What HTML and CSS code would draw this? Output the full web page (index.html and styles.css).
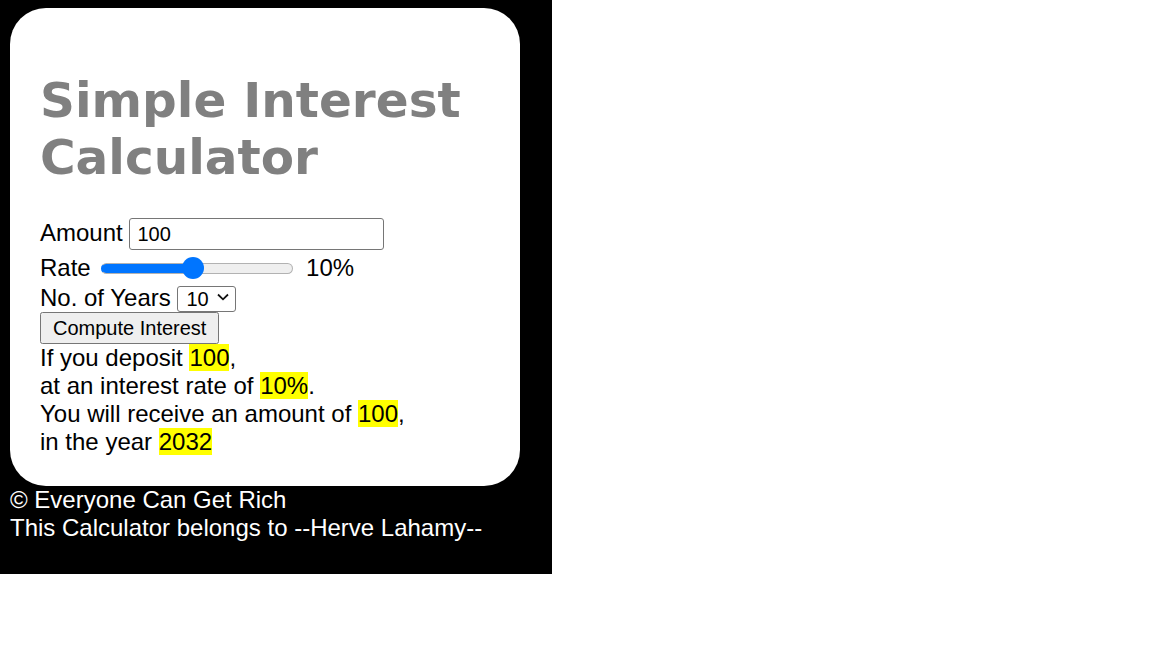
FILE: index.html
```html
<!DOCTYPE html>
<html>
<head>
<meta charset="utf-8">
<link rel="stylesheet" href="styles.css">
</head>
<body>
<div class="wrap">
  <main class="card">
    <h1 class="title">Simple Interest Calculator</h1>
    <div class="row row-amount">Amount <input class="amount" type="number" value="100"></div>
    <div class="row row-rate">Rate <input class="rate" type="range" min="1" max="20" value="10"> <span class="rate-val">10%</span></div>
    <div class="row">No. of Years <span class="select-wrap"><select class="years"><option>10</option></select><svg class="chev" width="12" height="8" viewBox="0 0 12 8"><path d="M1 1.5 L6 6.3 L11 1.5" fill="none" stroke="#111" stroke-width="1.8"/></svg></span></div>
    <div class="row"><button class="btn">Compute Interest</button></div>
    <div class="result">
      If you deposit <mark>100</mark>,<br>
      at an interest rate of <mark>10%</mark>.<br>
      You will receive an amount of <mark>100</mark>,<br>
      in the year <mark>2032</mark>
    </div>
  </main>
  <footer class="foot">
    © Everyone Can Get Rich<br>
    This Calculator belongs to --Herve Lahamy--
  </footer>
</div>
</body>
</html>
```
FILE: styles.css
```css
html, body { margin: 0; padding: 0; background: #fff; }
.wrap {
  width: 542px;
  height: 566px;
  background: #000;
  padding: 8px 0 0 10px;
  font-family: "Liberation Sans", Arial, sans-serif;
  font-size: 24px;
}
.card {
  width: 450px;
  background: #fff;
  border-radius: 36px;
  padding: 30px 30px 30px 30px;
  color: #000;
}
.title {
  font-family: "DejaVu Sans", Verdana, sans-serif;
  font-weight: bold;
  font-size: 48.5px;
  color: #808080;
  margin: 34px 0 32px 0;
  line-height: 57px;
}
.row { line-height: 28px; }
.row-amount { margin-bottom: 4px; }
.row-rate { margin-bottom: 2px; }
.amount {
  width: 255px;
  height: 32px;
  box-sizing: border-box;
  font-family: "Liberation Sans", Arial, sans-serif;
  font-size: 20px;
  padding: 1px 7px;
  border: 1px solid #767676;
  border-radius: 3px;
  vertical-align: baseline;
}
.rate {
  -webkit-appearance: none;
  appearance: none;
  width: 192px;
  height: 24px;
  margin: 0 6px 0 4px;
  vertical-align: -4px;
  background: transparent;
}
.rate::-webkit-slider-runnable-track {
  height: 11px;
  box-sizing: border-box;
  border-radius: 6px;
  background: linear-gradient(to right, #0075ff 0, #0075ff 48%, #efefef 48%);
  border: 1px solid #b2b2b2;
  border-left-color: #0075ff;
}
.rate::-webkit-slider-thumb {
  -webkit-appearance: none;
  appearance: none;
  width: 22px;
  height: 22px;
  border-radius: 50%;
  background: #0075ff;
  border: none;
  margin-top: -6.5px;
}
.select-wrap {
  position: relative;
  display: inline-block;
  vertical-align: baseline;
}
.years {
  -webkit-appearance: none;
  appearance: none;
  font-family: "Liberation Sans", Arial, sans-serif;
  font-size: 20px;
  width: 59px;
  height: 26px;
  padding: 0 0 0 8px;
  border: 1px solid #767676;
  border-radius: 3px;
  background: #fff;
  color: #000;
}
.chev {
  position: absolute;
  right: 7px;
  top: 9px;
  pointer-events: none;
}
.btn {
  font-family: "Liberation Sans", Arial, sans-serif;
  font-size: 20px;
  padding: 2px 11px;
  height: 32px;
}
.result { line-height: 28px; }
mark { background: #ff0; color: #000; }
.foot {
  color: #fff;
  line-height: 28px;
  margin-top: 0;
}
```
